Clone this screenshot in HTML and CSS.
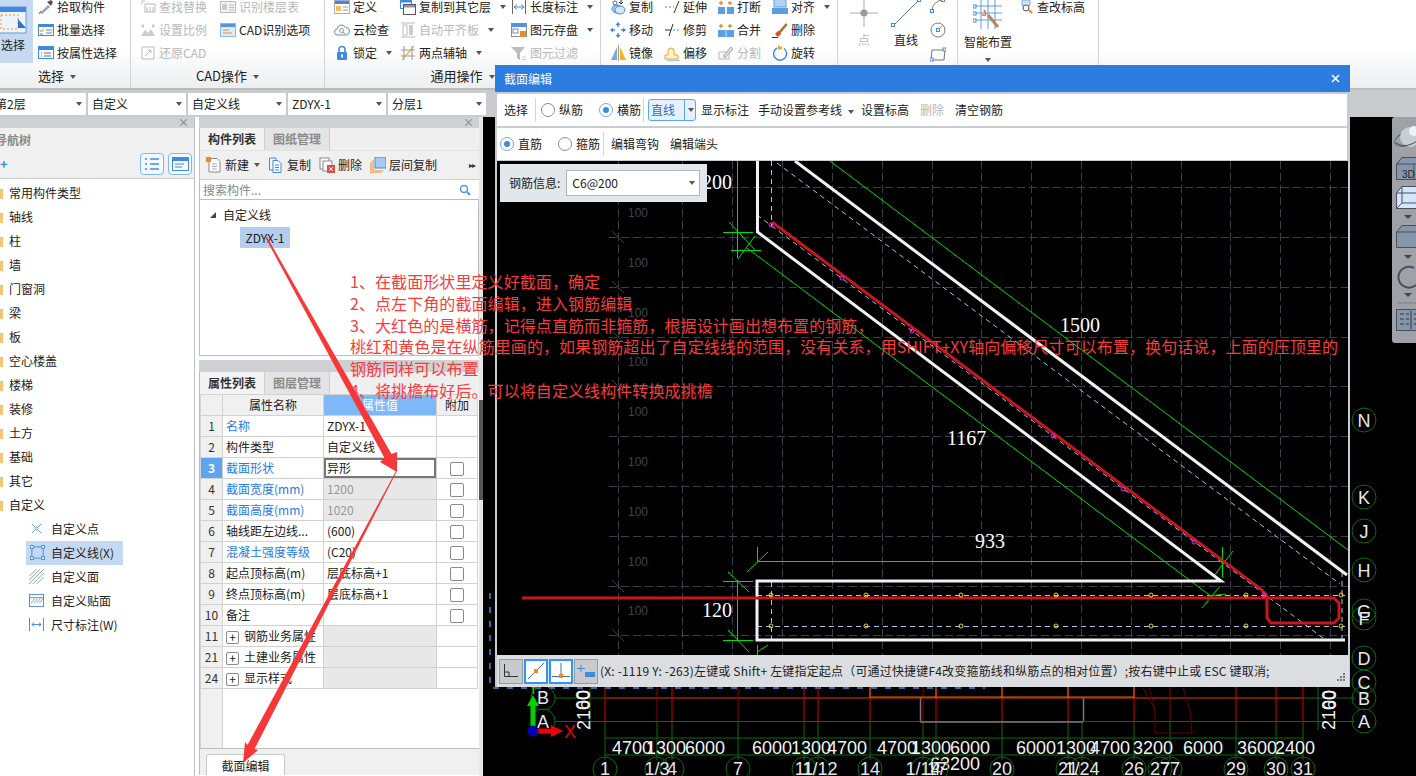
FILE: index.html
```html
<!DOCTYPE html>
<html lang="zh">
<head>
<meta charset="utf-8">
<title>截面编辑</title>
<link rel="stylesheet" href="styles.css">
</head>
<body>
<svg class="defs" width="0" height="0">
  <defs>
    <symbol id="i-pick" viewBox="0 0 16 16"><path d="M2 14 L10 6 L12 8 L4 15 Z" fill="#9aa0a8"/><path d="M9 3 L13 7 L15 3 L13 1 Z" fill="#555"/><path d="M1 15 L3 12" stroke="#666"/></symbol>
    <symbol id="i-batch" viewBox="0 0 16 16"><rect x="0.5" y="2.5" width="15" height="11" fill="#fff" stroke="#3f8ae0"/><rect x="1" y="3" width="14" height="2" fill="#3f8ae0"/><path d="M2 8 L3.5 10 L6 6.5" stroke="#ec8a20" fill="none"/><path d="M2 12 H5 M8 8 H14 M8 11 H14" stroke="#3f8ae0"/></symbol>
    <symbol id="i-attr" viewBox="0 0 16 16"><rect x="0.5" y="1.5" width="15" height="12" fill="#fff" stroke="#3f8ae0"/><rect x="1" y="2" width="14" height="3" fill="#3f8ae0"/><path d="M3 8 H4 M6 8 H13 M3 11 H4 M6 11 H13" stroke="#4f6a8a"/></symbol>
    <symbol id="i-find" viewBox="0 0 16 16"><rect x="5" y="5" width="10" height="8" fill="none" stroke="#bbb"/><path d="M7 8 V13 M10 8 V13 M13 8 V13 M2 2 H5 M2 2 V5" stroke="#bbb"/></symbol>
    <symbol id="i-scale" viewBox="0 0 16 16"><path d="M1 14 L5 8 L8 11 L11 7 L15 14 Z" fill="#ccc"/><path d="M1 4 H4 M12 4 H15 M3 2 V6 M13 2 V6" stroke="#bbb"/></symbol>
    <symbol id="i-restore" viewBox="0 0 16 16"><path d="M2 2 V14 H14 V2 Z" fill="none" stroke="#bbb"/><path d="M5 11 L11 5 M8 5 H11 V8" stroke="#bbb" fill="none"/></symbol>
    <symbol id="i-floor" viewBox="0 0 16 16"><rect x="0.5" y="2.5" width="15" height="11" fill="#f3f3f3" stroke="#bbb"/><path d="M9 6 H14 M9 8.5 H14 M9 11 H14" stroke="#bbb"/><rect x="2" y="5" width="5" height="6" fill="#ccc"/></symbol>
    <symbol id="i-cadopt" viewBox="0 0 16 16"><rect x="0.5" y="1.5" width="15" height="13" fill="#dfeafa" stroke="#8fb6e6"/><rect x="1" y="2" width="14" height="3" fill="#4f94e2"/><path d="M3 8 H9 M3 11 H12" stroke="#e88a30"/></symbol>
    <symbol id="i-def" viewBox="0 0 16 16"><rect x="0.5" y="1.5" width="15" height="13" fill="#fff" stroke="#aab"/><rect x="1" y="2" width="14" height="3" fill="#3f8ae0"/><rect x="2" y="7" width="5" height="5" fill="#f3c060"/><path d="M9 8 H14 M9 11 H14" stroke="#999"/></symbol>
    <symbol id="i-cloud" viewBox="0 0 16 16"><path d="M4 13 A3 3 0 0 1 3 7 A4.5 4.5 0 0 1 11.5 5.5 A3.7 3.7 0 0 1 12 13 Z" fill="#f8fbff" stroke="#4f94e2"/><circle cx="7.5" cy="8.5" r="2" fill="none" stroke="#ec8a20"/><path d="M9 10 L11 12" stroke="#ec8a20"/></symbol>
    <symbol id="i-lock" viewBox="0 0 16 16"><path d="M5 7 V4.5 A3 3 0 0 1 11 4.5 V7" fill="none" stroke="#3f8ae0" stroke-width="1.6"/><rect x="3" y="7" width="10" height="8" rx="1" fill="#3f8ae0"/><rect x="7" y="9.5" width="2" height="3" fill="#fff"/></symbol>
    <symbol id="i-copyto" viewBox="0 0 16 16"><rect x="0.5" y="0.5" width="11" height="9" fill="#fff" stroke="#3f8ae0"/><rect x="1" y="1" width="10" height="2.5" fill="#3f8ae0"/><rect x="3.5" y="5.5" width="12" height="10" fill="#fff" stroke="#556"/><rect x="4" y="6" width="11" height="2.5" fill="#8a95a5"/></symbol>
    <symbol id="i-alignb" viewBox="0 0 16 16"><path d="M1 1 H15 M1 15 H15" stroke="#bbb"/><rect x="3" y="3" width="4" height="10" fill="none" stroke="#bbb"/><rect x="9" y="3" width="4" height="10" fill="#ccc"/></symbol>
    <symbol id="i-twop" viewBox="0 0 16 16"><path d="M1 11 H15 M1 5 H15 M4 1 V15 M12 1 V15" stroke="#999"/><path d="M2 15 L14 1" stroke="#ec8a20"/></symbol>
    <symbol id="i-len" viewBox="0 0 16 16"><path d="M1.5 1 V15 M14.5 1 V15" stroke="#666"/><path d="M3 8 H13 M3 8 L6 5.5 M3 8 L6 10.5 M13 8 L10 5.5 M13 8 L10 10.5" stroke="#3f8ae0" fill="none"/></symbol>
    <symbol id="i-save" viewBox="0 0 16 16"><rect x="0.5" y="1.5" width="15" height="13" fill="#fff" stroke="#7a8ea8"/><rect x="1" y="2" width="14" height="3" fill="#4f94e2"/><rect x="2" y="7" width="5" height="4" fill="none" stroke="#7a8ea8"/><rect x="9" y="9" width="6" height="6" fill="#ec8a20"/></symbol>
    <symbol id="i-filter" viewBox="0 0 16 16"><path d="M0 2 H14 L9 8 V15 L6 13 V8 Z" fill="#bcbcbc"/><path d="M11 12 H15 M11 14.5 H15" stroke="#ccc"/></symbol>
    <symbol id="i-copy" viewBox="0 0 16 16"><circle cx="5" cy="4" r="2" fill="none" stroke="#666"/><ellipse cx="7" cy="10" rx="5" ry="4" fill="#a5c8f0" stroke="#3f8ae0"/><ellipse cx="10" cy="11" rx="5" ry="4" fill="#d5e6fa" stroke="#3f8ae0"/><path d="M11 1 V5 M9 3 L11 5 L13 3" stroke="#333" fill="none"/></symbol>
    <symbol id="i-move" viewBox="0 0 16 16"><path d="M8 0 L10.5 3 H5.5 Z M8 16 L10.5 13 H5.5 Z M0 8 L3 5.5 V10.5 Z M16 8 L13 5.5 V10.5 Z" fill="#3f8ae0"/><path d="M8 3 V5 M8 11 V13 M3 8 H5 M11 8 H13" stroke="#3f8ae0" stroke-width="1.5"/></symbol>
    <symbol id="i-mirror" viewBox="0 0 16 16"><path d="M7 2 V15 H1 Z" fill="#7aa8dc"/><path d="M10 2 V15 H16 Z" fill="#f6b21a"/><path d="M8.5 0 V16" stroke="#999"/></symbol>
    <symbol id="i-ext" viewBox="0 0 16 16"><path d="M1 8 H10" stroke="#3f8ae0" stroke-dasharray="2 2"/><path d="M10 14 L15 2" stroke="#333"/></symbol>
    <symbol id="i-trim" viewBox="0 0 16 16"><path d="M1 8 H7 " stroke="#333"/><path d="M9 8 H16" stroke="#3f8ae0" stroke-dasharray="2 2"/><path d="M5 14 L9 2" stroke="#333"/></symbol>
    <symbol id="i-break" viewBox="0 0 16 16"><rect x="0" y="8" width="7" height="7" fill="#5b9de6"/><rect x="9" y="8" width="7" height="7" fill="#5b9de6"/><path d="M3 2 V6 M1 4 H5 M12 2 V6 M10 4 H14" stroke="#ec8a20" stroke-width="1.3"/></symbol>
    <symbol id="i-merge" viewBox="0 0 16 16"><rect x="0" y="8" width="16" height="7" fill="#5b9de6"/><path d="M8 8 V15" stroke="#cfe3fa"/><path d="M3 2 V6 M1 4 H5 M12 2 V6 M10 4 H14" stroke="#ec8a20" stroke-width="1.3"/></symbol>
    <symbol id="i-split" viewBox="0 0 16 16"><path d="M1 14 H11 V7 H1 Z" fill="none" stroke="#bbb"/><path d="M5 11 L13 2 L15 4 L7 13 Z" fill="#ddd" stroke="#aaa"/></symbol>
    <symbol id="i-align" viewBox="0 0 16 16"><rect x="2" y="0" width="12" height="8" fill="#b5d2f4" stroke="#5b9de6"/><rect x="0" y="9" width="16" height="6" fill="#5b9de6"/></symbol>
    <symbol id="i-del" viewBox="0 0 16 16"><path d="M6 10 L14 1 L15.5 3 L8 12 Z" fill="#a8762f"/><path d="M3 12 L6 9 L9 12 L6 15 Z" fill="#e04a20"/><path d="M0 15.5 H6" stroke="#333"/></symbol>
    <symbol id="i-rot" viewBox="0 0 16 16"><path d="M5 3 A6.5 6.5 0 1 0 12 3.5" fill="none" stroke="#3f8ae0" stroke-width="1.5"/><path d="M6 0 L11 3 L6 5 Z" fill="#f2a21a"/></symbol>
    <symbol id="i-offs" viewBox="0 0 16 16"><path d="M1 14 V10 H4 V6 A3 3 0 0 1 10 6 V10 H14 V14 Z" fill="#fff3d8" stroke="#f2a21a"/><path d="M3 16 H16" stroke="#3f8ae0"/></symbol>
    <symbol id="i-check" viewBox="0 0 16 16"><rect x="4" y="1" width="8" height="6" rx="1" fill="#cfe0f6" stroke="#7aa8dc"/><circle cx="8" cy="9" r="3" fill="#fff" stroke="#556"/><path d="M11 11 L14 14" stroke="#ec8a20" stroke-width="2"/></symbol>
    <symbol id="i-new" viewBox="0 0 16 16"><path d="M3 1.5 H11 L14 4.5 V15 H3 Z" fill="#fff" stroke="#888"/><path d="M6 7 H11 M6 9.5 H11 M6 12 H11" stroke="#aaa"/><rect x="0" y="0" width="5" height="5" fill="#ec8a20"/></symbol>
    <symbol id="i-dup" viewBox="0 0 16 16"><path d="M1.5 1 H8 V13 H1.5 Z" fill="#eef5fd" stroke="#3f8ae0"/><path d="M5 3.5 H10 L13 6.5 V15.5 H5 Z" fill="#fff" stroke="#3f8ae0"/><path d="M7 8 H11 M7 10.5 H11 M7 13 H11" stroke="#3f8ae0"/></symbol>
    <symbol id="i-rem" viewBox="0 0 16 16"><rect x="1" y="1" width="9" height="11" fill="#fff" stroke="#888"/><rect x="4" y="4" width="9" height="10" fill="#fff" stroke="#888"/><rect x="8" y="8" width="8" height="8" fill="#df4a4a"/><path d="M10 10 L14 14 M14 10 L10 14" stroke="#fff"/></symbol>
    <symbol id="i-floorcopy" viewBox="0 0 16 16"><rect x="5" y="0" width="11" height="11" fill="#a8cbf3" stroke="#3f8ae0"/><path d="M1 5 V16 H11 M3 3 V14 H13" fill="none" stroke="#ec8a20"/></symbol>
    <symbol id="i-folder" viewBox="0 0 10 14"><path d="M0 1 H5 L6 3 H10 V13 H0 Z" fill="#f4c675"/></symbol>
  </defs>
</svg>

<header class="ribbon">
  <section class="rgroup g-sel">
    <div class="rbody">
      <div class="bigsel">
        <svg class="bigsel-ico" width="27" height="28" viewBox="0 0 27 28"><rect x="-3" y="1" width="29" height="26" fill="#eef3fc" stroke="#6a9bd8"/><rect x="-3" y="1" width="29" height="5" fill="#3f8ae0"/><rect x="1" y="9" width="17" height="14" fill="none" stroke="#ec9a30" stroke-dasharray="2 2"/><path d="M18 13 L26 22 H18 Z" fill="#2e75c8"/></svg>
        <span>选择</span>
      </div>
      <div class="rcol w92">
        <div class="ritem"><svg class="ico"><use href="#i-pick"/></svg>拾取构件</div>
        <div class="ritem"><svg class="ico"><use href="#i-batch"/></svg>批量选择</div>
        <div class="ritem"><svg class="ico"><use href="#i-attr"/></svg>按属性选择</div>
      </div>
    </div>
    <div class="rlabel lbl-sel">选择<i class="caret"></i></div>
  </section>

  <section class="rgroup g-cad">
    <div class="rbody">
      <div class="rcol w80">
        <div class="ritem off"><svg class="ico"><use href="#i-find"/></svg>查找替换</div>
        <div class="ritem off"><svg class="ico"><use href="#i-scale"/></svg>设置比例</div>
        <div class="ritem off"><svg class="ico"><use href="#i-restore"/></svg>还原CAD</div>
      </div>
      <div class="rcol w90">
        <div class="ritem off"><svg class="ico"><use href="#i-floor"/></svg>识别楼层表</div>
        <div class="ritem"><svg class="ico"><use href="#i-cadopt"/></svg>CAD识别选项</div>
      </div>
    </div>
    <div class="rlabel">CAD操作<i class="caret"></i></div>
  </section>

  <section class="rgroup g-gen">
    <div class="rbody">
      <div class="rcol w66">
        <div class="ritem"><svg class="ico"><use href="#i-def"/></svg>定义</div>
        <div class="ritem"><svg class="ico"><use href="#i-cloud"/></svg>云检查</div>
        <div class="ritem"><svg class="ico"><use href="#i-lock"/></svg>锁定<i class="caret"></i></div>
      </div>
      <div class="rcol w111">
        <div class="ritem"><svg class="ico"><use href="#i-copyto"/></svg>复制到其它层<i class="caret"></i></div>
        <div class="ritem off"><svg class="ico"><use href="#i-alignb"/></svg>自动平齐板<i class="caret"></i></div>
        <div class="ritem"><svg class="ico"><use href="#i-twop"/></svg>两点辅轴<i class="caret"></i></div>
      </div>
      <div class="rcol w80">
        <div class="ritem"><svg class="ico"><use href="#i-len"/></svg>长度标注<i class="caret"></i></div>
        <div class="ritem"><svg class="ico"><use href="#i-save"/></svg>图元存盘<i class="caret"></i></div>
        <div class="ritem off"><svg class="ico"><use href="#i-filter"/></svg>图元过滤</div>
      </div>
    </div>
    <div class="rlabel">通用操作<i class="caret"></i></div>
  </section>

  <section class="rgroup g-edit">
    <div class="rbody">
      <div class="rcol w54">
        <div class="ritem"><svg class="ico"><use href="#i-copy"/></svg>复制</div>
        <div class="ritem"><svg class="ico"><use href="#i-move"/></svg>移动</div>
        <div class="ritem"><svg class="ico"><use href="#i-mirror"/></svg>镜像</div>
      </div>
      <div class="rcol w54">
        <div class="ritem"><svg class="ico"><use href="#i-ext"/></svg>延伸</div>
        <div class="ritem"><svg class="ico"><use href="#i-trim"/></svg>修剪</div>
        <div class="ritem"><svg class="ico"><use href="#i-offs"/></svg>偏移</div>
      </div>
      <div class="rcol w54">
        <div class="ritem"><svg class="ico"><use href="#i-break"/></svg>打断</div>
        <div class="ritem"><svg class="ico"><use href="#i-merge"/></svg>合并</div>
        <div class="ritem off"><svg class="ico"><use href="#i-split"/></svg>分割</div>
      </div>
      <div class="rcol w60">
        <div class="ritem"><svg class="ico"><use href="#i-align"/></svg>对齐<i class="caret"></i></div>
        <div class="ritem"><svg class="ico"><use href="#i-del"/></svg>删除</div>
        <div class="ritem"><svg class="ico"><use href="#i-rot"/></svg>旋转</div>
      </div>
    </div>
  </section>

  <section class="rgroup g-draw">
    <div class="rbody">
      <div class="bigcol">
        <svg class="bigico" width="30" height="30" viewBox="0 0 30 30"><path d="M15 0 V28 M1 14 H29" stroke="#aaa"/><circle cx="15" cy="14" r="3.5" fill="#999"/></svg>
        <span class="off">点</span>
      </div>
      <div class="bigcol next">
        <svg class="bigico" width="30" height="30" viewBox="0 0 30 30"><path d="M2 27 L28 1" stroke="#5a7fa8"/><rect x="0.5" y="24.5" width="3" height="3" fill="#fff" stroke="#3f8ae0"/><rect x="26.5" y="-0.5" width="3" height="3" fill="#fff" stroke="#3f8ae0"/></svg>
        <span>直线</span>
      </div>
      <div class="smallcol">
        <svg width="16" height="16" viewBox="0 0 16 16"><path d="M2 13 A11 11 0 0 1 13 2" fill="none" stroke="#777"/><rect x="0.5" y="11.5" width="3" height="3" fill="#fff" stroke="#3f8ae0"/><rect x="11.5" y="0.5" width="3" height="3" fill="#fff" stroke="#3f8ae0"/></svg>
        <svg width="16" height="16" viewBox="0 0 16 16"><circle cx="8" cy="8" r="7" fill="none" stroke="#777"/><path d="M8 8 L12 4" stroke="#777"/><rect x="6.5" y="6.5" width="3" height="3" fill="#fff" stroke="#3f8ae0"/></svg>
        <svg width="16" height="16" viewBox="0 0 16 16"><path d="M2 4 H15 L14 14 H1 Z" fill="none" stroke="#777"/><rect x="0" y="12" width="3" height="3" fill="#fff" stroke="#3f8ae0"/><rect x="13" y="2" width="3" height="3" fill="#fff" stroke="#3f8ae0"/></svg>
      </div>
    </div>
  </section>

  <section class="rgroup g-smart">
    <div class="rbody">
      <div class="bigcol wide">
        <svg class="bigico" width="30" height="30" viewBox="0 0 30 30"><path d="M1 6 H29 M1 13 H29 M1 20 H29 M8 0 V29 M15 0 V29 M22 0 V29" stroke="#5b9de6"/><rect x="0" y="5" width="3" height="3" fill="#fff" stroke="#3f8ae0"/><rect x="0" y="12" width="3" height="3" fill="#fff" stroke="#3f8ae0"/><rect x="0" y="19" width="3" height="3" fill="#fff" stroke="#3f8ae0"/><path d="M15 15 L25 27" stroke="#b98758" stroke-width="3"/><path d="M11 10 L13 14 M9 15 H13" stroke="#ec6a20" stroke-width="1.5"/></svg>
        <span>智能布置</span>
        <i class="caret solo"></i>
      </div>
      <div class="rcol">
        <div class="ritem"><svg class="ico"><use href="#i-check"/></svg>查改标高</div>
      </div>
    </div>
  </section>
</header>

<div class="combos">
  <div class="combo first"><span>第2层</span><i class="caret"></i></div>
  <div class="combo"><span>自定义</span><i class="caret"></i></div>
  <div class="combo"><span>自定义线</span><i class="caret"></i></div>
  <div class="combo"><span>ZDYX-1</span><i class="caret"></i></div>
  <div class="combo"><span>分层1</span><i class="caret"></i></div>
</div>

<main class="main">
  <aside class="nav">
    <div class="strip"><span class="x">×</span></div>
    <div class="nav-title">导航树</div>
    <div class="nav-tools">
      <span class="plus">+</span>
      <span class="vbtn"><svg width="16" height="14" viewBox="0 0 16 14"><path d="M1 2 H3 M1 7 H3 M1 12 H3 M6 2 H15 M6 7 H15 M6 12 H15" stroke="#3f8ae0" stroke-width="1.3"/></svg></span>
      <span class="vbtn"><svg width="17" height="14" viewBox="0 0 17 14"><rect x="0.5" y="0.5" width="16" height="13" fill="none" stroke="#3f8ae0"/><rect x="1" y="1" width="15" height="3" fill="#3f8ae0"/><path d="M3 7 H12 M3 10 H10" stroke="#3f8ae0"/></svg></span>
    </div>
    <ul class="tree">
      <li><svg class="fold"><use href="#i-folder"/></svg>常用构件类型</li>
      <li><svg class="fold"><use href="#i-folder"/></svg>轴线</li>
      <li><svg class="fold"><use href="#i-folder"/></svg>柱</li>
      <li><svg class="fold"><use href="#i-folder"/></svg>墙</li>
      <li><svg class="fold"><use href="#i-folder"/></svg>门窗洞</li>
      <li><svg class="fold"><use href="#i-folder"/></svg>梁</li>
      <li><svg class="fold"><use href="#i-folder"/></svg>板</li>
      <li><svg class="fold"><use href="#i-folder"/></svg>空心楼盖</li>
      <li><svg class="fold"><use href="#i-folder"/></svg>楼梯</li>
      <li><svg class="fold"><use href="#i-folder"/></svg>装修</li>
      <li><svg class="fold"><use href="#i-folder"/></svg>土方</li>
      <li><svg class="fold"><use href="#i-folder"/></svg>基础</li>
      <li><svg class="fold"><use href="#i-folder"/></svg>其它</li>
      <li><svg class="fold"><use href="#i-folder"/></svg>自定义</li>
      <li class="sub"><svg class="sico" viewBox="0 0 16 16"><path d="M3 3 L13 13 M13 3 L3 13" stroke="#5a9de6"/><circle cx="8" cy="8" r="1.5" fill="#fff" stroke="#5a9de6"/></svg>自定义点</li>
      <li class="sub sel"><svg class="sico" viewBox="0 0 16 16"><rect x="2" y="2" width="12" height="12" fill="none" stroke="#3f8ae0"/><rect x="0.5" y="0.5" width="3" height="3" fill="#fff" stroke="#3f8ae0"/><rect x="12.5" y="0.5" width="3" height="3" fill="#fff" stroke="#3f8ae0"/><rect x="0.5" y="12.5" width="3" height="3" fill="#fff" stroke="#3f8ae0"/><rect x="12.5" y="12.5" width="3" height="3" fill="#fff" stroke="#3f8ae0"/></svg>自定义线(X)</li>
      <li class="sub"><svg class="sico" viewBox="0 0 16 16"><path d="M0 8 L8 0 M0 12 L12 0 M0 16 L16 0 M4 16 L16 4 M8 16 L16 8" stroke="#8a9ab0"/></svg>自定义面</li>
      <li class="sub"><svg class="sico" viewBox="0 0 16 16"><rect x="0.5" y="1.5" width="15" height="13" fill="none" stroke="#4a8ad6"/><path d="M1 5 H15" stroke="#4a8ad6"/><path d="M2 11 L6 6 M5 11 L9 6 M8 11 L12 6 M11 11 L15 6" stroke="#8a9ab0"/></svg>自定义贴面</li>
      <li class="sub"><svg class="sico" viewBox="0 0 16 16"><path d="M0.5 1 V15 M15.5 1 V15" stroke="#777"/><path d="M3 8 H13 M3 8 L5.5 6 M3 8 L5.5 10 M13 8 L10.5 6 M13 8 L10.5 10" stroke="#3f8ae0" fill="none"/></svg>尺寸标注(W)</li>
    </ul>
  </aside>

  <section class="mid">
    <div class="strip"><span class="x">×</span></div>
    <div class="tabs">
      <span class="tab on">构件列表</span><span class="tab">图纸管理</span>
    </div>
    <div class="mid-tools">
      <span class="tool"><svg class="ico"><use href="#i-new"/></svg>新建<i class="caret"></i></span>
      <span class="tool"><svg class="ico"><use href="#i-dup"/></svg>复制</span>
      <span class="tool"><svg class="ico"><use href="#i-rem"/></svg>删除</span>
      <span class="tool"><svg class="ico"><use href="#i-floorcopy"/></svg>层间复制</span>
      <span class="more">▸▸</span>
    </div>
    <div class="search">
      <span>搜索构件...</span>
      <svg width="12" height="12" viewBox="0 0 12 12"><circle cx="5" cy="5" r="3.5" fill="none" stroke="#4f94e2" stroke-width="1.5"/><path d="M8 8 L11 11" stroke="#4f94e2" stroke-width="1.8"/></svg>
    </div>
    <div class="comp-tree">
      <div class="ct-root"><i class="tri"></i>自定义线</div>
      <div class="ct-leaf">ZDYX-1</div>
    </div>
    <div class="strip2"></div>
    <div class="tabs">
      <span class="tab on">属性列表</span><span class="tab">图层管理</span>
    </div>
    <div class="tablewrap">
      <table class="props">
        <colgroup><col class="c1"><col class="c2"><col class="c3"><col class="c4"></colgroup>
        <thead><tr><th></th><th>属性名称</th><th class="hv">属性值</th><th>附加</th></tr></thead>
        <tbody>
          <tr><td class="n">1</td><td class="blue">名称</td><td>ZDYX-1</td><td></td></tr>
          <tr><td class="n">2</td><td>构件类型</td><td>自定义线</td><td></td></tr>
          <tr><td class="n act">3</td><td class="blue">截面形状</td><td class="cur">异形</td><td class="ck"><span class="box"></span></td></tr>
          <tr><td class="n">4</td><td class="blue">截面宽度(mm)</td><td class="ro">1200</td><td class="ck"><span class="box"></span></td></tr>
          <tr><td class="n">5</td><td class="blue">截面高度(mm)</td><td class="ro">1020</td><td class="ck"><span class="box"></span></td></tr>
          <tr><td class="n">6</td><td>轴线距左边线...</td><td>(600)</td><td class="ck"><span class="box"></span></td></tr>
          <tr><td class="n">7</td><td class="blue">混凝土强度等级</td><td>(C20)</td><td class="ck"><span class="box"></span></td></tr>
          <tr><td class="n">8</td><td>起点顶标高(m)</td><td>层底标高+1</td><td class="ck"><span class="box"></span></td></tr>
          <tr><td class="n">9</td><td>终点顶标高(m)</td><td>层底标高+1</td><td class="ck"><span class="box"></span></td></tr>
          <tr><td class="n">10</td><td>备注</td><td></td><td class="ck"><span class="box"></span></td></tr>
          <tr><td class="n">11</td><td><span class="exp">+</span>钢筋业务属性</td><td class="ro"></td><td></td></tr>
          <tr><td class="n">21</td><td><span class="exp">+</span>土建业务属性</td><td class="ro"></td><td></td></tr>
          <tr><td class="n">24</td><td><span class="exp">+</span>显示样式</td><td class="ro"></td><td></td></tr>
          <tr class="fill"><td class="n"></td><td colspan="3"></td></tr>
        </tbody>
      </table>
    </div>
    <div class="bottombar"><span class="sect-btn">截面编辑</span></div>
  </section>

  <div class="splitter"><span class="grip"></span></div>

  <section class="canvas">
    <svg class="bgcad" viewBox="483 117 933 659" width="933" height="659">
      <path d="M490 593 V688 H985" fill="none" stroke="#2f6aa8" stroke-width="2" stroke-dasharray="6 8"/>
      <g stroke="#0c6a0c" fill="none">
        <path d="M555 698 H1355 M555 721.5 H1355 M605 738 H1303 M605 755 H1303"/>
        <path d="M605 721 V760 M657 721 V760 M672 721 V760 M738 721 V760 M804 721 V760 M818 721 V760 M870 721 V760 M923 721 V760 M936 721 V760 M1002 721 V760 M1068 721 V760 M1082 721 V760 M1134 721 V760 M1170 721 V760 M1236 721 V760 M1276 721 V760 M1303 721 V760"/>
        <path d="M1318 685 V730 M590 685 V730"/>
      </g>
      <g stroke="#e00000" fill="none">
        <path d="M605 698 H1303 M605 721.5 H1303"/>
        <path d="M605 686 V721 M672 686 V721 M804 686 V721 M818 686 V721 M870 686 V721 M936 686 V721 M1002 686 V721 M1068 686 V721 M1134 686 V721 M1236 686 V721 M1276 686 V721 M1303 686 V721"/>
      </g>
      <path d="M657 686 V721 M738 686 V721 M923 686 V721 M1170 686 V721" stroke="#8d0000" fill="none"/>
      <path d="M870 686 V698 M936 686 V698 M1002 686 V698 M1068 686 V698 M1134 686 V698 M870 697 H1134" stroke="#d86a10" fill="none"/>
      <path d="M920.5 698 V721 M1083.5 698 V721 M920 722 H1083" stroke="#777" stroke-width="1.5" fill="none"/>
      <path d="M1143 688 L1155 710 V733 H1192 L1190 710 L1183 688 M1149 688 L1155 710" stroke="#650000" fill="none"/>

      <g class="dim">
        <text x="612" y="754">4700</text><text x="646" y="754">1300</text><text x="685" y="754">6000</text>
        <text x="752" y="754">6000</text><text x="791" y="754">1300</text><text x="827" y="754">4700</text>
        <text x="877" y="754">4700</text><text x="911" y="754">1300</text><text x="950" y="754">6000</text>
        <text x="1016" y="754">6000</text><text x="1056" y="754">1300</text><text x="1090" y="754">4700</text>
        <text x="1133" y="754">3200</text><text x="1183" y="754">6000</text><text x="1237" y="754">3600</text><text x="1275" y="754">2400</text>
        <text x="930" y="770">63200</text>
        <text transform="translate(590 730) rotate(-90)">2100</text>
        <text transform="translate(589 710) rotate(-90)">60</text>
        <text transform="translate(1335 730) rotate(-90)">2100</text>
        <text transform="translate(1336 710) rotate(-90)">60</text>
      </g>

      <g class="bub">
        <circle cx="605" cy="769" r="12"/><circle cx="657" cy="769" r="12"/><circle cx="672" cy="769" r="12"/><circle cx="738" cy="769" r="12"/>
        <circle cx="804" cy="769" r="12"/><circle cx="818" cy="769" r="12"/><circle cx="870" cy="769" r="12"/><circle cx="923" cy="769" r="12"/><circle cx="936" cy="769" r="12"/>
        <circle cx="1002" cy="769" r="12"/><circle cx="1068" cy="769" r="12"/><circle cx="1082" cy="769" r="12"/><circle cx="1134" cy="769" r="12"/>
        <circle cx="1160" cy="769" r="12"/><circle cx="1170" cy="769" r="12"/><circle cx="1236" cy="769" r="12"/><circle cx="1276" cy="769" r="12"/><circle cx="1303" cy="769" r="12"/>
        <circle cx="543" cy="698" r="12"/><circle cx="543" cy="721" r="12"/>
        <circle cx="1364" cy="420" r="12"/><circle cx="1364" cy="497" r="12"/><circle cx="1364" cy="531" r="12"/><circle cx="1364" cy="570" r="12"/>
        <circle cx="1364" cy="611" r="12"/><circle cx="1364" cy="618" r="12"/><circle cx="1364" cy="658" r="12"/><circle cx="1364" cy="682" r="12"/><circle cx="1364" cy="698" r="12"/><circle cx="1364" cy="721" r="12"/>
      </g>
      <g class="bubt">
        <text x="605" y="775">1</text><text x="657" y="775">1/3</text><text x="672" y="775">4</text><text x="738" y="775">7</text>
        <text x="804" y="775">11</text><text x="820" y="775">1/12</text><text x="870" y="775">14</text><text x="923" y="775">1/14</text><text x="937" y="775">17</text>
        <text x="1002" y="775">20</text><text x="1068" y="775">21</text><text x="1082" y="775">1/24</text><text x="1134" y="775">26</text>
        <text x="1160" y="775">27</text><text x="1170" y="775">77</text><text x="1236" y="775">29</text><text x="1276" y="775">30</text><text x="1303" y="775">31</text>
        <text x="543" y="704">B</text><text x="543" y="728">A</text>
        <text x="1364" y="427">N</text><text x="1364" y="504">K</text><text x="1364" y="538">J</text><text x="1364" y="577">H</text>
        <text x="1364" y="618">G</text><text x="1364" y="625">F</text><text x="1364" y="665">D</text><text x="1364" y="689">C</text><text x="1364" y="705">B</text><text x="1364" y="728">A</text>
      </g>

      <path d="M533 731 V702" stroke="#00d000" stroke-width="5"/>
      <path d="M533 695 L539 706 H527 Z" fill="#00d000"/>
      <path d="M533 731 H552" stroke="#f00000" stroke-width="5"/>
      <path d="M563 731 L551 725 V737 Z" fill="#f00000"/>
      <circle cx="533" cy="731" r="5.5" fill="#0000b0"/>
      <text class="axis-x" x="564" y="738">X</text>
      <text class="axis-y" x="528" y="694">Y</text>
    </svg>

    <div class="sidebar">
      <svg width="24" height="226" viewBox="0 0 24 226">
        <ellipse cx="17" cy="21" rx="15" ry="7" fill="none" stroke="#5a6470" transform="rotate(-20 17 21)"/>
        <circle cx="18" cy="20" r="10" fill="#c8ced6"/>
        <circle cx="22" cy="14" r="5" fill="#eef2f6"/>
        <path d="M4 26 Q14 33 28 22" stroke="#46505e" fill="none"/>
        <g transform="translate(4 40)"><path d="M0.5 7 L6 0.5 H24 V22.5 H0.5 Z" fill="#8595aa" stroke="#46505e"/><path d="M0.5 7 H24 M18 7 V22" stroke="#46505e"/><text class="three" x="6" y="21">3D</text></g>
        <g transform="translate(4 69)"><path d="M0.5 7 L6 0.5 H24 V22.5 H0.5 Z" fill="#d5e6fb" stroke="#46505e"/><path d="M0.5 7 H24 M6 0.5 V17 H24 M0.5 22.5 L6 17" stroke="#46505e" fill="none"/></g>
        <path d="M12 98 H20 L16 102 Z" fill="#444"/>
        <g transform="translate(4 108)"><path d="M0.5 7 L6 0.5 H24 V22.5 H0.5 Z" fill="#8595aa" stroke="#46505e"/><path d="M0.5 7 H24" stroke="#46505e"/></g>
        <path d="M12 138 H20 L16 142 Z" fill="#444"/>
        <path d="M22 151 A10.5 10.5 0 1 0 24 168" fill="none" stroke="#46505e" stroke-width="2"/>
        <path d="M12 176 H20 L16 180 Z" fill="#444"/>
        <path d="M5 186 H24" stroke="#7d8085"/>
        <g transform="translate(4 192)"><rect x="0.5" y="0.5" width="23" height="21" fill="#8595aa" stroke="#46505e"/><path d="M4 5 H8 M4 10 H8 M4 15 H8 M10 5 H13 M10 10 H13 M10 15 H13 M15 2 V20 M18 5 H22 M18 10 H22 M18 15 H22" stroke="#2f3640"/></g>
      </svg>
    </div>
  </section>
</main>

<div class="dialog">
  <div class="dlg-title"><span>截面编辑</span><svg class="dlg-x" width="9" height="9" viewBox="0 0 9 9"><path d="M1 1 L8 8 M8 1 L1 8" stroke="#fff" stroke-width="1.6"/></svg></div>
  <div class="dlg-row row1">
    <span class="dbtn pl">选择</span>
    <span class="vsep s1"></span>
    <span class="radio r1"><i class="dot"></i>纵筋</span>
    <span class="radio r2 on"><i class="dot"></i>横筋</span>
    <span class="vsep"></span>
    <span class="splitbtn"><b>直线</b><i class="caret"></i></span>
    <span class="dbtn b1">显示标注</span>
    <span class="dbtn b2">手动设置参考线<i class="caret"></i></span>
    <span class="dbtn b3">设置标高</span>
    <span class="dbtn off b4">删除</span>
    <span class="dbtn b5">清空钢筋</span>
  </div>
  <div class="dlg-row row2">
    <span class="radio r3 on"><i class="dot"></i>直筋</span>
    <span class="radio r4"><i class="dot"></i>箍筋</span>
    <span class="vsep"></span>
    <span class="dbtn b6">编辑弯钩</span>
    <span class="dbtn b7">编辑端头</span>
  </div>
  <div class="dlg-canvas">
    <svg class="drawing" viewBox="497 161 851 494" width="851" height="494">
      <g stroke="#3a3f4c" stroke-dasharray="8 4" fill="none">
        <path d="M609 187.5 H1348 M609 237.5 H1348 M609 287.5 H1348 M609 337.5 H1348 M609 386.5 H1348 M609 436.5 H1348 M609 486.5 H1348 M609 536.5 H1348 M609 586.5 H1348 M609 635.5 H1348"/>
        <path d="M618.5 161 V655 M682.5 161 V655 M732.5 161 V655 M782.5 161 V655 M832.5 161 V655 M882.5 161 V655 M932.5 161 V655 M981.5 161 V655 M1031.5 161 V655 M1081.5 161 V655 M1131.5 161 V655 M1181.5 161 V655 M1230.5 161 V655 M1280.5 161 V655 M1330.5 161 V655"/>
      </g>
      <path d="M612 231 L624 243 M612 281 L624 293 M612 331 L624 343 M612 380 L624 392 M612 580 L624 592 M612 629 L624 641" stroke="#3a3f4c"/>
      <g class="hund">
        <text x="628" y="217">100</text><text x="628" y="267">100</text><text x="628" y="317">100</text><text x="628" y="366">100</text><text x="628" y="416">100</text><text x="628" y="466">100</text><text x="628" y="516">100</text><text x="628" y="566">100</text><text x="628" y="615">100</text>
      </g>
      <g stroke="#a8c4ea" stroke-dasharray="5 4" fill="none">
        <path d="M771.5 161 V226 M771.5 582 V640"/>
        <path d="M757 215 L1323 638"/>
        <path d="M777 163 L1340 584"/>
        <path d="M757 595.5 H1345 M757 626.5 H1345 M1342 572 V640"/>
      </g>
      <g stroke="#00e000" fill="none">
        <path d="M830 161 L1348 550"/>
        <path d="M747 248 L1212 597"/>
        <path d="M737.5 161 V258 M723 232.5 H753 M731 250.5 H761 M729 222 L755 250 M738 259 L755 236"/>
        <path d="M758 561.5 H1222 M1222.5 547 V577 M1213 577 L1233 551"/>
        <path d="M757.5 547 V562 M747 572 L768 552"/>
        <path d="M737.5 580 V640 M723 581.5 H753 M723 640.5 H753 M728 572 L749 592 M728 630 L749 652 M757.5 645 V655 M757 652 L768 645"/>
        <path d="M1208 596 L1226 594 M1202 608 L1220 586"/>
      </g>
      <g stroke="#f2f2f2" stroke-width="3" fill="none">
        <path d="M757.5 161 V232 L1221 581 H757 V640 H1345"/>
        <path d="M795 161 L1347 575"/>
      </g>
      <path d="M772 222 L1262 590 L1267 596 V618 L1271 623 H1334 L1339 618 V603 L1334 598 H522" fill="none" stroke="#c8161f" stroke-width="3"/>
      <g fill="none" stroke="#ff20ff">
        <circle cx="771" cy="225" r="2"/><circle cx="842" cy="278" r="2"/><circle cx="912" cy="331" r="2"/><circle cx="1053" cy="436" r="2"/><circle cx="1123" cy="489" r="2"/><circle cx="1194" cy="542" r="2"/><circle cx="1264" cy="595" r="2"/>
      </g>
      <g fill="none" stroke="#f0d030">
        <circle cx="771" cy="595" r="2"/><circle cx="866" cy="595" r="2"/><circle cx="961" cy="595" r="2"/><circle cx="1056" cy="595" r="2"/><circle cx="1151" cy="595" r="2"/><circle cx="1246" cy="595" r="2"/><circle cx="1341" cy="595" r="2"/>
        <circle cx="771" cy="626" r="2"/><circle cx="866" cy="626" r="2"/><circle cx="961" cy="626" r="2"/><circle cx="1056" cy="626" r="2"/><circle cx="1151" cy="626" r="2"/><circle cx="1246" cy="626" r="2"/><circle cx="1341" cy="626" r="2"/>
      </g>
      <g class="val">
        <text x="692" y="189">1200</text>
        <text x="1060" y="332">1500</text>
        <text x="947" y="445">1167</text>
        <text x="975" y="548">933</text>
        <text x="702" y="617">120</text>
      </g>
    </svg>
    <div class="rebar-info">
      <span>钢筋信息:</span>
      <span class="rebar-sel"><span>C6@200</span><i class="caret"></i></span>
    </div>
  </div>
  <div class="dlg-status">
    <span class="sbtn"><svg width="16" height="16" viewBox="0 0 16 16"><path d="M1.5 1 V13.5 H15" fill="none" stroke="#333"/><path d="M1.5 9 H6 V13.5" fill="none" stroke="#333"/></svg></span>
    <span class="sbtn act"><svg width="18" height="18" viewBox="0 0 18 18"><path d="M1 17 L17 1" stroke="#3f6fb0"/><rect x="7" y="7" width="4" height="4" fill="#ec8a20"/></svg></span>
    <span class="sbtn act"><svg width="18" height="16" viewBox="0 0 18 16"><path d="M0 13.5 H18 M9 0 V13" stroke="#3f6fb0"/><rect x="7" y="11" width="4" height="4" fill="#ec8a20"/></svg></span>
    <span class="sbtn"><svg width="18" height="16" viewBox="0 0 18 16"><path d="M4 2 V9 M0 5.5 H8" stroke="#3f8ae0"/><rect x="8" y="9" width="10" height="5" fill="#3f8ae0"/></svg></span>
    <span class="status-text">(X: -1119 Y: -263)左键或 Shift+ 左键指定起点（可通过快捷键F4改变箍筋线和纵筋点的相对位置）;按右键中止或 ESC 键取消;</span>
    <svg class="resize" width="10" height="10" viewBox="0 0 10 10"><path d="M7 1 H9 V3 H7 Z M4 4 H6 V6 H4 Z M7 4 H9 V6 H7 Z M1 7 H3 V9 H1 Z M4 7 H6 V9 H4 Z M7 7 H9 V9 H7 Z" fill="#777"/></svg>
  </div>
</div>

<div class="note">
  <p>1、在截面形状里定义好截面，确定</p>
  <p>2、点左下角的截面编辑，进入钢筋编辑</p>
  <p>3、大红色的是横筋，记得点直筋而非箍筋，根据设计画出想布置的钢筋，</p>
  <p>桃红和黄色是在纵筋里画的，如果钢筋超出了自定线线的范围，没有关系，用SHIFT+XY轴向偏移尺寸可以布置，换句话说，上面的压顶里的</p>
  <p>钢筋同样可以布置</p>
  <p>4、将挑檐布好后。可以将自定义线构件转换成挑檐</p>
</div>

<svg class="arrows" width="1416" height="776" viewBox="0 0 1416 776">
  <path d="M265 237 L267 237 L391.5 454 L397 452 L397 472 L380 462 L384.5 458 Z" fill="#f73838"/>
  <path d="M397 471 L254.5 749 L258 750 L243 763 L245 742 L247.5 745 L396 471 Z" fill="#f73838"/>
</svg>
</body>
</html>
```

FILE: styles.css
```css
* { box-sizing: border-box; }
html, body { margin: 0; padding: 0; }
body {
  width: 1416px; height: 776px; overflow: hidden; position: relative;
  font: 12px/16px "Noto Sans CJK SC", "Noto Sans", sans-serif;
  color: #222; background: #c9cbcf;
}
ul, p { margin: 0; padding: 0; list-style: none; }
i { font-style: normal; }
.defs { position: absolute; }
.ico { width: 16px; height: 16px; flex: none; }
.caret {
  display: inline-block; width: 0; height: 0; flex: none;
  border-left: 3.5px solid transparent; border-right: 3.5px solid transparent;
  border-top: 4px solid #555; margin-left: 6px; vertical-align: middle;
}

/* ribbon */
.ribbon {
  display: flex; height: 90px; overflow: hidden;
  background: linear-gradient(#fff 0, #fff 55%, #eceef0 100%);
  border-bottom: 2px solid #b9bbbe;
}
.rgroup { position: relative; display: flex; flex-direction: column; height: 88px; border-right: 1px solid #d2d4d7; flex: none; }
.rbody { display: flex; height: 69px; margin-top: -5px; flex: none; }
.rlabel { height: 24px; line-height: 24px; text-align: center; font-size: 13px; white-space: nowrap; flex: none; }
.g-sel { width: 131px; }
.lbl-sel { padding-right: 16px; }
.g-cad { width: 194px; padding-left: 9px; }
.g-cad .rlabel { margin-left: -9px; }
.g-gen { width: 276px; padding-left: 9px; }
.g-gen .rlabel { margin-left: -9px; }
.g-edit { width: 237px; padding-left: 9px; }
.g-draw { width: 120px; }
.g-smart { width: 141px; }
.bigsel { width: 33px; margin-right: 5px; height: 68px; background: #c5d9f1; display: flex; flex-direction: column; padding-top: 11px; overflow: hidden; }
.bigsel span { margin-left: 1px; margin-top: 3px; font-size: 12px; line-height: 16px; }
.bigsel-ico { display: block; }
.rcol { display: flex; flex-direction: column; }
.w92 { width: 92px; } .w80 { width: 80px; } .w90 { width: 90px; } .w66 { width: 66px; } .w111 { width: 111px; } .w54 { width: 54px; } .w60 { width: 60px; }
.ritem { display: flex; align-items: center; gap: 3px; height: 23px; flex: none; white-space: nowrap; }
.off { color: #b8b8b8; }
.bigcol { width: 42px; display: flex; flex-direction: column; align-items: center; padding-top: 4px; margin-left: 5px; }
.bigcol.next { margin-left: 0; }
.bigcol span { line-height: 16px; margin-top: 3px; white-space: nowrap; }
.bigcol.wide { width: 50px; margin-left: 5px; margin-right: 5px; padding-top: 5px; }
.wide span { margin-top: 4px; }
.caret.solo { margin: 8px 0 0; }
.smallcol { display: flex; flex-direction: column; gap: 8px; padding: 3px 0 0 3px; }

/* combos */
.combos { display: flex; gap: 2px; height: 27px; padding: 3px 0 2px; margin-left: -12px; width: 1428px; }
.combo { width: 98px; height: 22px; background: #fff; display: flex; align-items: center; justify-content: space-between; padding: 0 3px 0 4px; white-space: nowrap; font-size: 12px; }
.combo .caret { margin-right: 1px; }
.combo.first { padding-left: 7px; }
.main { display: flex; height: 659px; background: #fff; }

/* nav */
.nav { width: 195px; flex: none; border-right: 1px solid #bcbec1; overflow: hidden; }
.strip { height: 11px; background: #ced0d4; position: relative; flex: none; }
.x { position: absolute; right: 5px; top: -2px; font-size: 11px; line-height: 14px; color: #777; }
.nav-title { height: 22px; background: #f0f0f0; line-height: 23px; margin-left: -5px; color: #8a8a8a; font-size: 12px; font-weight: 700; white-space: nowrap; }
.nav-tools { height: 29px; display: flex; align-items: center; background: #f0f0f0; border-bottom: 1px solid #c9c9c9; }
.plus { color: #3f8ae0; font-weight: 700; font-size: 13px; margin-right: auto; line-height: 14px; }
.vbtn { width: 24px; height: 22px; border: 1px solid #7eb6f0; border-radius: 4px; background: #f4f9ff; display: flex; align-items: center; justify-content: center; margin-right: 4px; }
.vbtn + .vbtn { margin-right: 2px; }
.tree { padding-top: 2px; }
.tree li { height: 24px; line-height: 24px; padding-left: 9px; position: relative; white-space: nowrap; }
.fold { position: absolute; left: -7px; top: 5px; width: 10px; height: 14px; }
.tree .sub { padding-left: 51px; }
.sico { position: absolute; left: 29px; top: 4px; width: 15px; height: 15px; }
.tree .sel { background: #c5d8f2; margin-left: 26px; width: 97px; padding-left: 25px; }
.tree .sel .sico { left: 4px; }

/* mid */
.mid { width: 280px; flex: none; margin-left: 4px; display: flex; flex-direction: column; background: #fff; }
.tabs { height: 22px; display: flex; background: #efefef; border-left: 1px solid #bcbec1; flex: none; }
.tab { width: 65px; text-align: center; line-height: 22px; color: #8a8a8a; background: #e4e4e4; font-weight: 700; border-right: 1px solid #cfcfcf; }
.tab.on { color: #333; background: #f3f3f3; }
.mid-tools { height: 29px; display: flex; align-items: center; background: #f0f0f0; padding-left: 6px; border-left: 1px solid #bcbec1; border-top: 1px solid #e4e4e4; flex: none; }
.tool { display: flex; align-items: center; gap: 3px; margin-right: 8px; white-space: nowrap; }
.tool .caret { margin-left: 2px; }
.more { margin-left: auto; margin-right: 4px; font-size: 8px; letter-spacing: -1px; color: #333; }
.search { height: 20px; display: flex; align-items: center; justify-content: space-between; padding: 0 8px 0 3px; color: #888; border-left: 1px solid #bcbec1; border-top: 1px solid #cfcfcf; flex: none; }
.comp-tree { height: 157px; border: 1px solid #bcbec1; padding-top: 4px; flex: none; }
.ct-root { height: 21px; line-height: 21px; padding-left: 23px; position: relative; }
.tri { position: absolute; left: 10px; top: 8px; width: 0; height: 0; border-left: 6px solid transparent; border-bottom: 6px solid #444; }
.ct-leaf { width: 50px; height: 21px; margin: 2px 0 0 40px; background: #b3cdee; line-height: 21px; text-align: center; }
.strip2 { height: 16px; background: linear-gradient(#fff 0 4px, #ced0d4 4px); flex: none; }
.tablewrap { flex: none; height: 355px; border-left: 1px solid #bcbec1; border-bottom: 1px solid #bcbec1; overflow: hidden; }
.props { table-layout: fixed; width: 277px; border-collapse: collapse; font-size: 12px; }
.c1 { width: 22px; } .c2 { width: 101px; } .c3 { width: 113px; } .c4 { width: 41px; }
.props th, .props td { height: 21px; padding: 0 3px; border: 1px solid #d2d2d2; line-height: 16px; white-space: nowrap; overflow: hidden; font-weight: 400; }
.props th { background: #f0f0f0; text-align: center; height: 21px; }
.props .hv { background: #7fb8f8; color: #fff; }
.props .n { background: #f0f0f0; text-align: center; padding: 0; color: #333; }
.props .act { background: #5ea5ee; color: #fff; font-weight: 700; }
.props .blue { color: #2a7ae2; }
.props .ro { background: #e8e8e8; color: #999; }
.props .cur { box-shadow: inset 0 0 0 2px #777; }
.props .ck { text-align: center; padding: 0; }
.box { display: inline-block; width: 14px; height: 14px; border: 1px solid #8a8a8a; border-radius: 2px; background: #fff; vertical-align: middle; }
.exp { display: inline-block; width: 13px; height: 13px; border: 1px solid #8a8a8a; border-radius: 2px; line-height: 10px; text-align: center; margin: 0 5px 0 0; font-size: 12px; vertical-align: -1px; }
.fill td { height: 60px; border-bottom: 0; }
.fill td + td { border: 0; background: #fff; }
.bottombar { flex: none; height: 26px; overflow: hidden; background: #f0f0f0; padding: 5px 0 0 6px; display: flex; border-left: 1px solid #bcbec1; }
.sect-btn { width: 79px; background: #fff; border: 1px solid #c8c8c8; border-bottom: 0; border-radius: 3px 3px 0 0; text-align: center; line-height: 21px; }
.splitter { width: 4px; flex: none; background: #e8e8e8; position: relative; }
.grip { position: absolute; left: 0; top: 283px; width: 4px; height: 100px; background: #555; }

/* canvas */
.canvas { flex: 1; background: #000; position: relative; overflow: hidden; }
.bgcad { display: block; }
.dim text { fill: #f2f2f2; font: 18px "Liberation Sans", sans-serif; }
.bub circle { fill: none; stroke: #0c6a0c; }
.bubt text { fill: #e6e6e6; font: 18px "Liberation Sans", sans-serif; text-anchor: middle; }
.axis-x { fill: #e00000; font: 18px "Liberation Sans", sans-serif; }
.axis-y { fill: #00d000; font: 16px "Liberation Sans", sans-serif; }
.sidebar { position: absolute; right: 0; top: 0; width: 24px; height: 226px; background: #9ea1a5; border-radius: 3px 0 0 3px; }
.sidebar svg { display: block; }
.three { fill: #1e2530; font: 10px "Liberation Sans", sans-serif; }

/* dialog */
.dialog { position: absolute; left: 495px; top: 65px; width: 855px; height: 622px; background: #c8cbd0; display: flex; flex-direction: column; padding: 0 2px 0 2px; z-index: 2; }
.dlg-title { height: 27px; margin: 0 -2px 2px; background: #2d7de0; color: #fff; display: flex; align-items: center; justify-content: space-between; padding: 0 10px 0 9px; font-size: 12px; flex: none; }
.dlg-row { height: 32px; background: #fff; display: flex; align-items: center; white-space: nowrap; flex: none; margin-right: 1px; }
.row1 { margin-bottom: 2px; }
.row2 { height: 32px; margin-bottom: 1px; }
.vsep { width: 1px; height: 24px; background: #d5d5d5; }
.s1 { margin-left: 3px; }
.dbtn { height: 22px; line-height: 22px; padding: 0 4px; border-radius: 3px; }
.dbtn.pl { margin-left: 3px; }
.radio { display: inline-flex; align-items: center; gap: 4px; }
.dot { width: 14px; height: 14px; border: 1px solid #8d8d8d; border-radius: 50%; background: #fff; display: block; position: relative; }
.radio.on .dot { border-color: #7aa8dc; }
.radio.on .dot::after { content: ""; position: absolute; left: 3px; top: 3px; width: 6px; height: 6px; background: #3f8ae0; border-radius: 50%; }
.r1 { margin-left: 5px; }
.r2 { margin-left: 16px; margin-right: 2px; }
.splitbtn { margin-left: 4px; width: 48px; height: 22px; border: 1px solid #5aa6f2; border-radius: 3px; background: #e6f1fc; display: flex; align-items: center; color: #2a6fc0; padding-left: 2px; }
.splitbtn b { font-weight: 400; width: 34px; border-right: 1px solid #5aa6f2; height: 100%; line-height: 20px; }
.splitbtn .caret { margin-left: 3px; }
.b1 { margin-left: 1px; }
.b2 { margin-left: 1px; }
.b3 { margin-left: -1px; }
.b4 { margin-left: 3px; }
.b5 { margin-left: 3px; }
.r3 { margin-left: 3px; }
.r4 { margin-left: 16px; margin-right: 3px; }
.row2 .vsep { margin-right: 3px; }
.b7 { margin-left: 3px; }
.dlg-canvas { flex: none; height: 494px; background: #000; position: relative; overflow: hidden; }
.drawing { display: block; }
.hund text { fill: #3e4452; font: 12px "Liberation Sans", sans-serif; }
.val text { fill: #fff; font: 20px "Liberation Serif", serif; }
.rebar-info { position: absolute; left: 3px; top: 3px; width: 207px; height: 38px; background: #e1e7ea; display: flex; align-items: center; gap: 6px; padding-left: 9px; }
.rebar-sel { width: 134px; height: 26px; background: #fff; border: 1px solid #b5b5b5; display: flex; align-items: center; justify-content: space-between; padding: 0 4px 0 5px; }
.dlg-status { height: 32px; background: #dcdde0; display: flex; align-items: center; padding-left: 2px; position: relative; flex: none; margin-right: -1px; white-space: nowrap; gap: 1px; }
.sbtn { width: 24px; height: 25px; background: #c9cacd; border: 1px solid #9b9b9b; display: flex; align-items: center; justify-content: center; flex: none; }
.sbtn.act { background: #fff; border: 2px solid #2c97f5; }
.status-text { margin-left: 1px; letter-spacing: .18px; }
.resize { position: absolute; right: 3px; bottom: 5px; }

/* overlays */
.note { position: absolute; left: 350px; top: 271px; z-index: 3; color: #f63c3c; font-size: 16px; line-height: 21.8px; letter-spacing: .08px; white-space: nowrap; pointer-events: none; }
.arrows { position: absolute; left: 0; top: 0; z-index: 4; pointer-events: none; }
```
